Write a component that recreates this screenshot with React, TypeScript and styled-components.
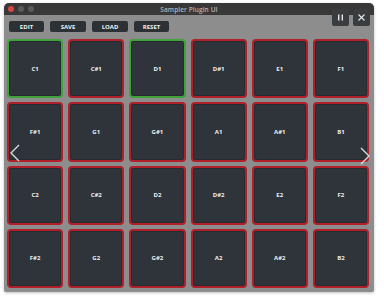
import React from "react";
import styled, { createGlobalStyle } from "styled-components";

const Global = createGlobalStyle`
  html, body { margin: 0; padding: 0; background: #ffffff; }
  body { font-family: "Open Sans", "Liberation Sans", sans-serif; }
`;

const Page = styled.div`
  width: 384px;
  height: 300px;
  padding: 3px 10px 8px 4px;
  box-sizing: border-box;
`;

const Window = styled.div`
  position: relative;
  width: 370px;
  height: 289px;
  background: #8d8d8d;
  border-radius: 5px 5px 2px 2px;
  overflow: hidden;
  display: flex;
  flex-direction: column;
  box-shadow: 0 1px 3px rgba(0, 0, 0, 0.25);
`;

const TitleBar = styled.div`
  height: 12px;
  flex: none;
  background: #383838;
  display: flex;
  align-items: center;
  position: relative;
  padding-left: 4px;
  gap: 4px;
`;

const Light = styled.span<{ $c: string }>`
  width: 6px;
  height: 6px;
  border-radius: 50%;
  background: ${(p) => p.$c};
`;

const Title = styled.div`
  position: absolute;
  left: 0;
  right: 0;
  top: 0;
  bottom: 0;
  display: flex;
  align-items: center;
  justify-content: center;
  color: #b5b5b5;
  font-size: 6.5px;
  font-weight: 600;
  letter-spacing: 0.1px;
`;

const Toolbar = styled.div`
  display: flex;
  gap: 6px;
  padding: 6px 0 0 5px;
  height: 11px;
  flex: none;
`;

const ToolButton = styled.div<{ $w: number }>`
  width: ${(p) => p.$w}px;
  height: 11px;
  background: #2b3134;
  border-radius: 2px;
  color: #f2f2f2;
  font-size: 6px;
  font-weight: 700;
  display: flex;
  align-items: center;
  justify-content: center;
`;

const CornerButtons = styled.div`
  position: absolute;
  top: 6px;
  right: 4px;
  display: flex;
  gap: 4px;
`;

const IconButton = styled.div`
  width: 17px;
  height: 17px;
  background: #3a3d3f;
  border-radius: 2px;
  display: flex;
  align-items: center;
  justify-content: center;
`;

const Grid = styled.div`
  display: grid;
  grid-template-columns: repeat(6, 1fr);
  grid-template-rows: repeat(4, 1fr);
  column-gap: 5px;
  row-gap: 4px;
  padding: 0 5px 4px 3px;
  margin-top: 7px;
  flex: 1;
`;

const Pad = styled.div<{ $active: boolean }>`
  border: 2.5px solid ${(p) => (p.$active ? "#40a23b" : "#b01f2a")};
  border-radius: 4px;
  background: #2e3439;
  box-shadow: inset 0 0 0 1px #262b2f;
  display: flex;
  align-items: center;
  justify-content: center;
  color: #f0f0f0;
  font-size: 6px;
  font-weight: 700;
`;

const Arrow = styled.div<{ $side: "left" | "right"; $top: number }>`
  position: absolute;
  top: ${(p) => p.$top}px;
  ${(p) => (p.$side === "left" ? "left: 5px;" : "right: 3px;")}
  width: 12px;
  height: 20px;
`;

const notes = [
  "C1", "C#1", "D1", "D#1", "E1", "F1",
  "F#1", "G1", "G#1", "A1", "A#1", "B1",
  "C2", "C#2", "D2", "D#2", "E2", "F2",
  "F#2", "G2", "G#2", "A2", "A#2", "B2",
];
const active = new Set(["C1", "D1"]);

export default function App() {
  return (
    <>
      <Global />
      <Page>
        <Window>
          <TitleBar>
            <Light $c="#d9463f" />
            <Light $c="#5b5b5b" />
            <Light $c="#5b5b5b" />
            <Title>Sampler Plugin UI</Title>
          </TitleBar>
          <CornerButtons>
            <IconButton>
              <svg width="9" height="9" viewBox="0 0 9 9">
                <rect x="2" y="1.5" width="1.4" height="6" fill="#e8e8e8" />
                <rect x="5.6" y="1.5" width="1.4" height="6" fill="#e8e8e8" />
              </svg>
            </IconButton>
            <IconButton>
              <svg width="9" height="9" viewBox="0 0 9 9">
                <path d="M1.5 1.5 L7.5 7.5 M7.5 1.5 L1.5 7.5" stroke="#e8e8e8" strokeWidth="1.1" />
              </svg>
            </IconButton>
          </CornerButtons>
          <Toolbar>
            <ToolButton $w={35}>EDIT</ToolButton>
            <ToolButton $w={36}>SAVE</ToolButton>
            <ToolButton $w={36}>LOAD</ToolButton>
            <ToolButton $w={35}>RESET</ToolButton>
          </Toolbar>
          <Grid>
            {notes.map((n) => (
              <Pad key={n} $active={active.has(n)}>
                {n}
              </Pad>
            ))}
          </Grid>
          <Arrow $side="left" $top={140}>
            <svg width="12" height="20" viewBox="0 0 12 20">
              <path d="M10 2 L2 10 L10 18" fill="none" stroke="#d8d8d8" strokeWidth="1.4" />
            </svg>
          </Arrow>
          <Arrow $side="right" $top={143}>
            <svg width="12" height="20" viewBox="0 0 12 20">
              <path d="M2 2 L10 10 L2 18" fill="none" stroke="#d8d8d8" strokeWidth="1.4" />
            </svg>
          </Arrow>
        </Window>
      </Page>
    </>
  );
}
